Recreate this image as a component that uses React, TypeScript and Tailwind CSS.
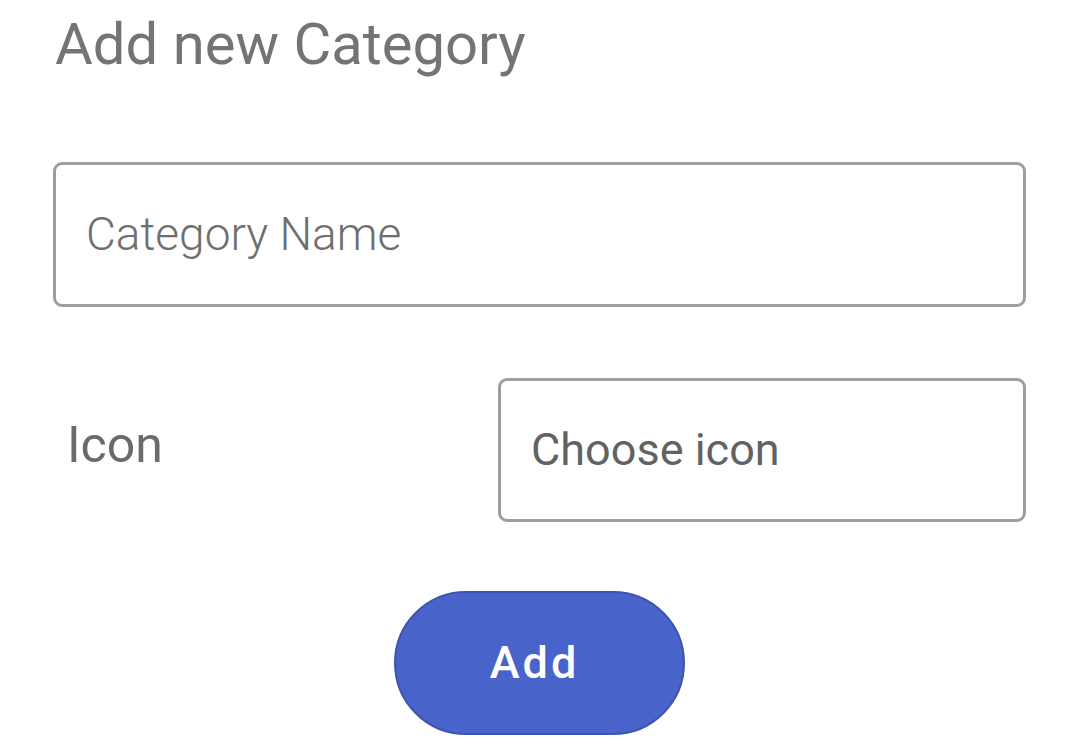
import React from "react";

export default function App() {
  return (
    <div className="w-[1080px] h-[750px] bg-white overflow-hidden" style={{ fontFamily: "Roboto, 'Liberation Sans', sans-serif" }}>
      <div className="pl-[53px] pr-[54px] pt-[4px] flex flex-col">
        <h1 className="text-[58px] leading-[80px] text-[#747474] font-normal pl-[2px]">Add new Category</h1>
        <div className="mt-[78px] h-[145px] border-[3px] border-[#9e9e9e] rounded-[9px] flex items-center pl-[30px]">
          <span className="text-[46px] font-light text-[#6f6f6f]">Category Name</span>
        </div>
        <div className="mt-[71px] flex items-center">
          <div className="w-[445px] pl-[14px] pb-[10px] text-[50px] text-[#6a6a6a]">Icon</div>
          <div className="flex-1 h-[144px] border-[3px] border-[#9e9e9e] rounded-[9px] flex items-center pl-[30px]">
            <span className="text-[45px] text-[#626262]">Choose icon</span>
          </div>
        </div>
        <div className="mt-[69px] flex justify-center">
          <button className="w-[291px] h-[144px] rounded-full bg-[#4863c9] border-[2px] border-[#3d55b0] text-white text-[45px] font-medium tracking-[3px] pr-[10px]">
            Add
          </button>
        </div>
      </div>
    </div>
  );
}
